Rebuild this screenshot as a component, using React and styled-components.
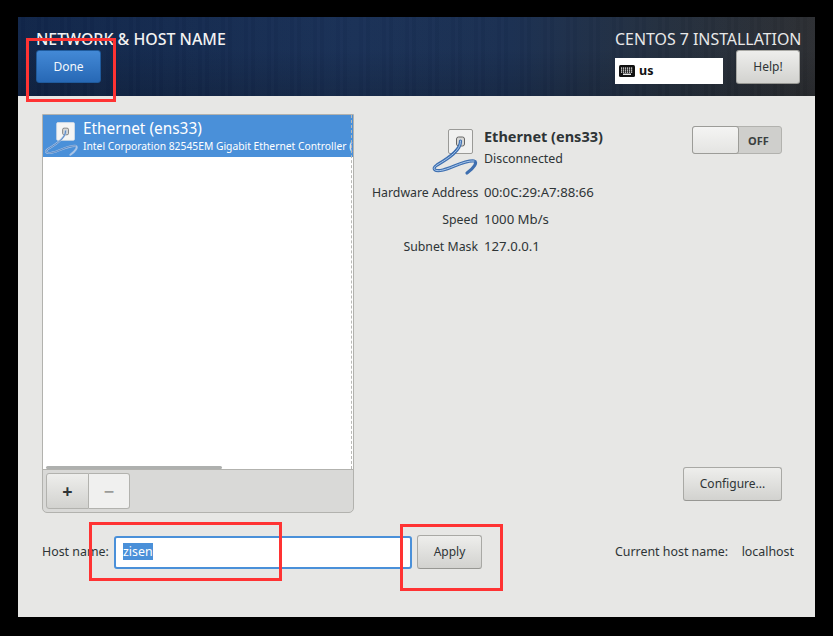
import styled, { createGlobalStyle } from 'styled-components';

const GlobalStyle = createGlobalStyle`
    html, body {
        margin: 0;
        background: #000;
    }
    body {
        font-family: "Noto Sans", sans-serif;
        font-size: 12.4px;
        color: #2e3436;
    }
`;

const Screen = styled.div`
    position: relative;
    width: 833px;
    height: 636px;
    padding: 17px 18px 19px;
    box-sizing: border-box;
    background: #000;
    overflow: hidden;
`;

const Window = styled.div`
    display: flex;
    flex-direction: column;
    height: 600px;
    background: #e7e7e5;
`;

const Header = styled.header`
    display: flex;
    justify-content: space-between;
    height: 79px;
    padding: 13px 15px 0 18px;
    box-sizing: border-box;
    background:
        repeating-linear-gradient(90deg, rgba(255,255,255,0.012) 0 3px, rgba(0,0,0,0.02) 3px 7px, rgba(255,255,255,0.006) 7px 19px, rgba(0,0,0,0.016) 19px 23px),
        linear-gradient(180deg, rgba(0,0,0,0) 40%, rgba(0,0,0,0.16) 100%),
        linear-gradient(90deg, #11264a 0%, #1a3157 42%, #1b3052 62%, #25303f 82%, #2d2f33 100%);
`;

const HeaderColumn = styled.div`
    display: flex;
    flex-direction: column;
    align-items: flex-start;
`;

const HeaderTitle = styled.div`
    font-family: "Noto Sans", sans-serif;
    font-size: 15.9px;
    font-weight: 500;
    line-height: 18px;
    color: #f2f2f2;
    white-space: nowrap;
`;

const HeaderRight = styled.div`
    display: flex;
    flex-direction: column;
    align-items: stretch;
    width: 185px;
`;

const ProductTitle = styled(HeaderTitle)`
    font-weight: 400;
    color: #e8e8e8;
    text-align: right;
`;

const HeaderControls = styled.div`
    display: flex;
    justify-content: space-between;
    align-items: flex-end;
    margin-top: 2px;
`;

const Button = styled.button`
    display: flex;
    align-items: center;
    justify-content: center;
    box-sizing: border-box;
    width: ${p => p.$width}px;
    height: ${p => p.$height || 34}px;
    padding: 0 0 1px;
    border: 1px solid #a9a9a5;
    border-bottom-color: #979793;
    border-radius: 3px;
    background: linear-gradient(180deg, #eeeeec 0%, #d2d2cf 100%);
    font-family: "Noto Sans", sans-serif;
    font-size: 12px;
    color: #2e3436;
`;

const DoneButton = styled(Button)`
    margin-top: 2px;
    border-color: #1f5a9c;
    background: linear-gradient(180deg, #4389d6 0%, #2768b5 100%);
    color: #f4f7fb;
`;

const KeyboardBox = styled.div`
    display: flex;
    align-items: center;
    gap: 4px;
    width: 108px;
    height: 26px;
    padding: 0 0 1px 4px;
    box-sizing: border-box;
    background: #fff;
    font-weight: 700;
    font-size: 12.5px;
    color: #111;
`;

const Main = styled.main`
    flex: 1;
    display: flex;
    min-height: 0;
    padding: 18px 33px 0 24px;
`;

const Panel = styled.section`
    display: flex;
    flex-direction: column;
    width: 312px;
    height: 399px;
    box-sizing: border-box;
    border: 1px solid #b2b2ae;
    border-radius: 0 0 5px 5px;
    overflow: hidden;
    background: #d9d9d7;
`;

const DeviceList = styled.div`
    position: relative;
    flex: 1;
    background: #fff;
    border-bottom: 1px solid #b2b2ae;
`;

const DeviceRow = styled.div`
    display: flex;
    gap: 3px;
    height: 42px;
    padding-top: 5px;
    box-sizing: border-box;
    background: #4a90d9;
    color: #fff;
    overflow: hidden;
`;

const DeviceText = styled.div`
    padding-top: 1px;
    white-space: nowrap;
`;

const DeviceName = styled.div`
    font-size: 15.4px;
    line-height: 16px;
`;

const DeviceModel = styled.div`
    margin-top: 3px;
    font-size: 10.3px;
    line-height: 13px;
`;

const ScrollEdge = styled.div`
    position: absolute;
    top: 0;
    right: 1px;
    bottom: 0;
    border-right: 1px dashed #b9b9b6;
`;

const ScrollThumb = styled.div`
    position: absolute;
    left: 3px;
    bottom: 0;
    width: 176px;
    height: 3px;
    border-radius: 2px;
    background: #aeb0ae;
`;

const Toolbar = styled.div`
    display: flex;
    height: 42px;
    padding: 3px;
    box-sizing: border-box;
`;

const ToolButton = styled.div`
    display: flex;
    align-items: center;
    justify-content: center;
    box-sizing: border-box;
    width: ${p => (p.$muted ? 41 : 43)}px;
    height: 36px;
    border: 1px solid #b2b2ae;
    font-size: 18px;
    font-weight: 700;
    color: ${p => (p.$muted ? '#9a9b98' : '#2e3436')};
    background: ${p => (p.$muted ? '#f0f0ef' : 'linear-gradient(180deg, #eeeeec, #d2d2cf)')};
    border-radius: ${p => (p.$muted ? '0 3px 3px 0' : '3px 0 0 3px')};
    border-left-width: ${p => (p.$muted ? 0 : 1)}px;
`;

const Details = styled.section`
    flex: 1;
    display: flex;
    flex-direction: column;
    height: 387px;
    padding-left: 18px;
`;

const DetailsTop = styled.div`
    display: flex;
    align-items: flex-start;
    justify-content: space-between;
    padding-top: 12px;
`;

const DeviceSummary = styled.div`
    display: grid;
    grid-template-columns: 106px auto;
    column-gap: 6px;
    grid-template-rows: 26px 26px 27px 27px 27px;
    align-items: center;
`;

const IconCell = styled.div`
    grid-row: span 2;
    display: flex;
    justify-content: flex-end;
    align-self: start;
    height: 52px;
    margin-right: -2px;
`;

const SummaryHead = styled.div`
    grid-row: span 2;
    align-self: start;
    padding-top: 2px;
`;

const SummaryName = styled.div`
    font-size: 14.5px;
    font-weight: 700;
    line-height: 17px;
`;

const SummaryState = styled.div`
    margin-top: 5px;
    line-height: 17px;
`;

const Label = styled.div`
    padding-top: 1px;
    font-size: 12.3px;
    text-align: right;
    white-space: nowrap;
`;

const Value = styled.div`
    font-size: 13.2px;
    white-space: nowrap;
`;

const Switch = styled.div`
    display: flex;
    width: 90px;
    height: 28px;
    box-sizing: border-box;
    border: 1px solid #b2b2ae;
    border-radius: 3px;
    background: #cfcfcc;
`;

const SwitchKnob = styled.div`
    width: 45px;
    margin: -1px 0 -1px -1px;
    border: 1px solid #9c9c98;
    border-radius: 3px;
    background: linear-gradient(180deg, #f4f4f3, #e4e4e2);
`;

const SwitchLabel = styled.div`
    flex: 1;
    display: flex;
    align-items: center;
    justify-content: center;
    padding-right: 3px;
    font-size: 11px;
    font-weight: 700;
    color: #3a3f40;
`;

const ConfigureRow = styled.div`
    display: flex;
    justify-content: flex-end;
    margin-top: auto;
`;

const Footer = styled.footer`
    display: flex;
    align-items: center;
    height: 34px;
    margin-bottom: 48px;
    padding: 0 21px 0 24px;
`;

const HostLabel = styled.div`
    width: 72px;
    margin-top: -1px;
    white-space: nowrap;
`;

const HostEntry = styled.div`
    display: flex;
    align-items: center;
    width: 298px;
    height: 33px;
    padding: 0 0 1px 7px;
    box-sizing: border-box;
    border: 2px solid #4a90d9;
    border-radius: 3px;
    background: #fff;
`;

const Selection = styled.span`
    background: #4a90d9;
    color: #fff;
`;

const ApplyButton = styled(Button)`
    margin-left: 5px;
`;

const CurrentHost = styled.div`
    display: flex;
    justify-content: space-between;
    width: 179px;
    margin: -1px 0 0 auto;
    white-space: nowrap;
`;

const Annotation = styled.div`
    position: absolute;
    left: ${p => p.$x}px;
    top: ${p => p.$y}px;
    width: ${p => p.$w}px;
    height: ${p => p.$h}px;
    box-sizing: border-box;
    border: 3px solid #ff3333;
    pointer-events: none;
`;

const CableSvg = styled.svg`
    flex-shrink: 0;
`;

const CABLE = 'M460.5 141 C461 150 449 158 437 165 C431 169 435 172 443 170 C452 168 465 160 474 161';

function CableIcon({ size, selected }) {
    return (
        <CableSvg width={size} height={size} viewBox="430 126 50 50" fill="none">
            <rect x="448.5" y="129.5" width="24" height="24" rx="1.5"
                fill={selected ? '#f5f5f4' : '#f1f1f0'} stroke={selected ? '#dfe3e8' : '#9a9a97'} />
            <rect x="456.5" y="137" width="8" height="9" rx="2" fill="#d8d8d6" stroke="#666" />
            <path d={`${CABLE} C478 162 474 168 467 173`}
                stroke={selected ? '#a9c4e6' : '#3e6fb0'} strokeWidth={selected ? 2.8 : 3.2} strokeLinecap="round" />
            <path d={CABLE}
                stroke={selected ? '#3f72b4' : '#a9c8ec'} strokeWidth="1" strokeLinecap="round" />
        </CableSvg>
    );
}

function KeyboardIcon() {
    const keys = [];
    for (let row = 0; row < 3; row++) {
        for (let col = 0; col < 6; col++) {
            keys.push(<rect key={`${row}-${col}`} x={2 + col * 2} y={2.5 + row * 2} width="1.2" height="1.2" fill="#fff" />);
        }
    }
    return (
        <svg width="16" height="12" viewBox="0 0 16 12">
            <rect width="16" height="12" rx="1.5" fill="#111" />
            {keys}
            <rect x="4" y="8.6" width="8" height="1.3" fill="#fff" />
        </svg>
    );
}

export default function App() {
    return (
        <Screen>
            <GlobalStyle />
            <Window>
                <Header>
                    <HeaderColumn>
                        <HeaderTitle>NETWORK &amp; HOST NAME</HeaderTitle>
                        <DoneButton $width={65} $height={33}>Done</DoneButton>
                    </HeaderColumn>
                    <HeaderRight>
                        <ProductTitle>CENTOS 7 INSTALLATION</ProductTitle>
                        <HeaderControls>
                            <KeyboardBox><KeyboardIcon />us</KeyboardBox>
                            <Button $width={64}>Help!</Button>
                        </HeaderControls>
                    </HeaderRight>
                </Header>
                <Main>
                    <Panel>
                        <DeviceList>
                            <DeviceRow>
                                <CableIcon size={37} selected />
                                <DeviceText>
                                    <DeviceName>Ethernet (ens33)</DeviceName>
                                    <DeviceModel>Intel Corporation 82545EM Gigabit Ethernet Controller (</DeviceModel>
                                </DeviceText>
                            </DeviceRow>
                            <ScrollEdge />
                            <ScrollThumb />
                        </DeviceList>
                        <Toolbar>
                            <ToolButton>+</ToolButton>
                            <ToolButton $muted>−</ToolButton>
                        </Toolbar>
                    </Panel>
                    <Details>
                        <DetailsTop>
                            <DeviceSummary>
                                <IconCell><CableIcon size={50} /></IconCell>
                                <SummaryHead>
                                    <SummaryName>Ethernet (ens33)</SummaryName>
                                    <SummaryState>Disconnected</SummaryState>
                                </SummaryHead>
                                <Label>Hardware Address</Label><Value>00:0C:29:A7:88:66</Value>
                                <Label>Speed</Label><Value>1000 Mb/s</Value>
                                <Label>Subnet Mask</Label><Value>127.0.0.1</Value>
                            </DeviceSummary>
                            <Switch>
                                <SwitchKnob />
                                <SwitchLabel>OFF</SwitchLabel>
                            </Switch>
                        </DetailsTop>
                        <ConfigureRow>
                            <Button $width={99}>Configure...</Button>
                        </ConfigureRow>
                    </Details>
                </Main>
                <Footer>
                    <HostLabel>Host name:</HostLabel>
                    <HostEntry><Selection>zisen</Selection></HostEntry>
                    <ApplyButton $width={65}>Apply</ApplyButton>
                    <CurrentHost>
                        <span>Current host name:</span>
                        <span>localhost</span>
                    </CurrentHost>
                </Footer>
            </Window>
            <Annotation $x={26} $y={38} $w={90} $h={64} />
            <Annotation $x={89} $y={522} $w={193} $h={59} />
            <Annotation $x={400} $y={524} $w={103} $h={67} />
        </Screen>
    );
}
